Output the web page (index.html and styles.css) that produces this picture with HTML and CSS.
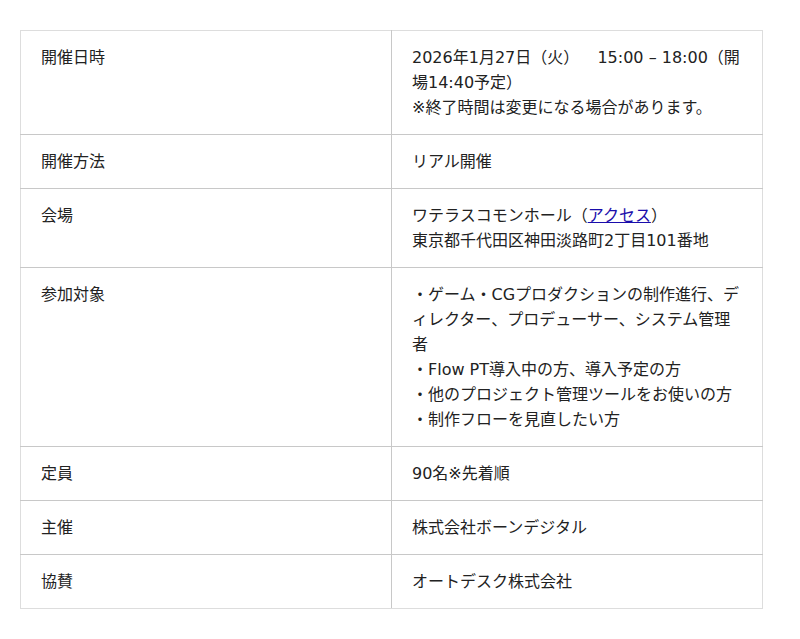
FILE: index.html
```html
<!DOCTYPE html>
<html lang="ja">
<head>
<meta charset="utf-8">
<link rel="stylesheet" href="styles.css">
</head>
<body>
<div class="wrap">
<table class="info">
<tr><th>開催日時</th><td>2026年1月27日（火）　&nbsp;&nbsp;15:00 – 18:00（開場14:40予定）<br>※終了時間は変更になる場合があります。</td></tr>
<tr><th>開催方法</th><td>リアル開催</td></tr>
<tr><th>会場</th><td>ワテラスコモンホール（<a href="#">アクセス</a>）<br>東京都千代田区神田淡路町2丁目101番地</td></tr>
<tr><th>参加対象</th><td>・ゲーム・CGプロダクションの制作進行、ディレクター、プロデューサー、システム管理者<br>・Flow PT導入中の方、導入予定の方<br>・他のプロジェクト管理ツールをお使いの方<br>・制作フローを見直したい方</td></tr>
<tr><th>定員</th><td>90名※先着順</td></tr>
<tr><th>主催</th><td>株式会社ボーンデジタル</td></tr>
<tr><th>協賛</th><td>オートデスク株式会社</td></tr>
</table>
</div>
</body>
</html>
```
FILE: styles.css
```css
html, body { margin: 0; padding: 0; background: #fff; }
body {
  font-family: "DejaVu Sans", "Noto Sans CJK JP", sans-serif;
  font-size: 16px;
  color: #222;
}
.wrap { padding: 30px 0 0 20px; }
.info {
  width: 743px;
  border-collapse: collapse;
  border: 1px solid #ddd;
  table-layout: fixed;
}
.info th, .info td {
  width: 50%;
  text-align: left;
  font-weight: normal;
  vertical-align: top;
  padding: 14px 20px;
  line-height: 25px;
  border: 1px solid #c8c8c8;
}
.info tr:first-child th, .info tr:first-child td { border-top-color: #ddd; }
.info tr:last-child th, .info tr:last-child td { border-bottom-color: #ddd; }
.info th { border-left-color: #ddd; }
.info td { border-right-color: #ddd; }
.info a { color: #1a0dab; text-decoration: underline; }
```
